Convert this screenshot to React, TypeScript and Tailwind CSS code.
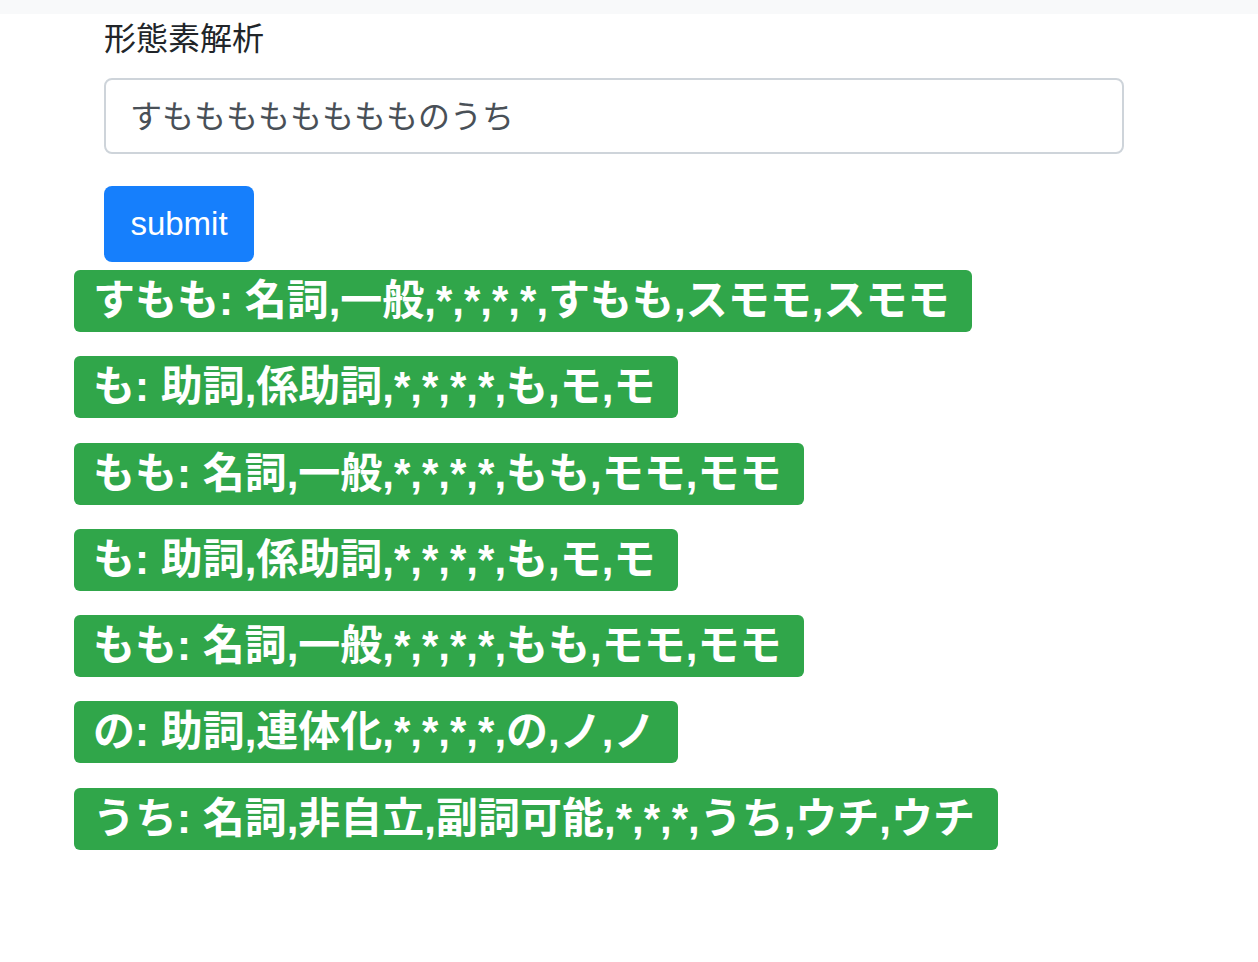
const tokens = [
  'すもも: 名詞,一般,*,*,*,*,すもも,スモモ,スモモ',
  'も: 助詞,係助詞,*,*,*,*,も,モ,モ',
  'もも: 名詞,一般,*,*,*,*,もも,モモ,モモ',
  'も: 助詞,係助詞,*,*,*,*,も,モ,モ',
  'もも: 名詞,一般,*,*,*,*,もも,モモ,モモ',
  'の: 助詞,連体化,*,*,*,*,の,ノ,ノ',
  'うち: 名詞,非自立,副詞可能,*,*,*,うち,ウチ,ウチ',
]

export default function App() {
  return (
    <div className="min-h-[962px] bg-white font-['Noto_Sans_CJK_JP','Noto_Sans',sans-serif] text-[#212529]">
      <div className="h-[14px] bg-[#f8f9fa]" />
      <div className="pl-[104px]">
        <form className="w-[1020px]" onSubmit={e => e.preventDefault()}>
          <label className="block h-[48px] text-[32px] leading-[44px] mb-[16px]">形態素解析</label>
          <input
            defaultValue="すもももももももものうち"
            className="block w-full h-[76px] px-[24px] pb-[4px] border-2 border-[#ced4da] rounded-[8px] text-[32px] text-[#495057] outline-none"
          />
          <button
            type="submit"
            className="mt-[32px] w-[150px] h-[76px] rounded-[8px] bg-[#167ffc] text-white text-[33px] font-['Liberation_Sans',sans-serif]"
          >
            submit
          </button>
        </form>
      </div>
      <div className="mt-[8px] pl-[74px] flex flex-col items-start gap-[24.3px]">
        {tokens.map((t, i) => (
          <span
            key={i}
            className="h-[62px] flex items-center pl-[19px] pr-[23px] rounded-[6px] bg-[#30a64a] text-white font-bold text-[42px] leading-none font-['Liberation_Sans','Noto_Sans_CJK_JP',sans-serif]"
          >
            {t}
          </span>
        ))}
      </div>
    </div>
  )
}
